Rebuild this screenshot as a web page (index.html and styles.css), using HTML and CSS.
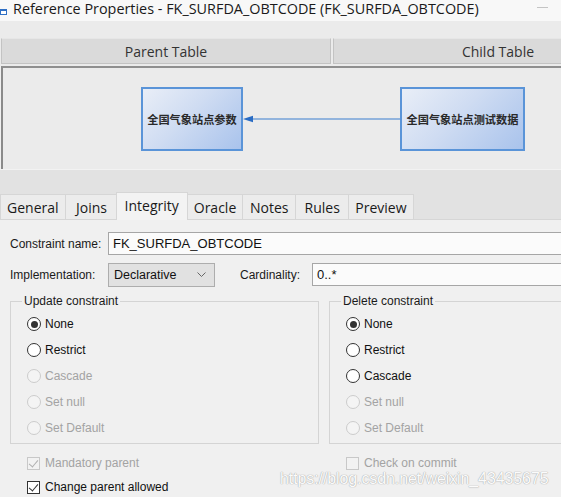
FILE: index.html
```html
<!DOCTYPE html>
<html lang="en">
<head>
<meta charset="utf-8">
<title>Reference Properties</title>
<link rel="stylesheet" href="styles.css">
</head>
<body>
<div class="window">
  <div class="titlebar">
    <svg class="app-icon" width="7" height="8" viewBox="0 0 7 8"><rect x="0.5" y="1.5" width="6" height="5" fill="#fff" stroke="#2f6fc4"/><rect x="0" y="1" width="7" height="2" fill="#2f6fc4"/></svg>
    <span class="title">Reference Properties - FK_SURFDA_OBTCODE (FK_SURFDA_OBTCODE)</span>
    <span class="minimize"></span>
  </div>
  <div class="top-gap"></div>
  <div class="headers">
    <div class="col-header">Parent Table</div>
    <div class="col-header">Child Table</div>
  </div>
  <div class="diagram">
    <div class="node node-parent">全国气象站点参数</div>
    <svg class="link" width="160" height="12" viewBox="0 0 160 12">
      <line x1="10" y1="6" x2="160" y2="6" stroke="#3b7fd0" stroke-width="1.2"/>
      <polygon points="3,6 13,2.8 13,9.2" fill="#2a6cc4"/>
    </svg>
    <div class="node node-child">全国气象站点测试数据</div>
  </div>
  <div class="tab-strip">
    <div class="tab">General</div>
    <div class="tab">Joins</div>
    <div class="tab tab-active">Integrity</div>
    <div class="tab">Oracle</div>
    <div class="tab">Notes</div>
    <div class="tab">Rules</div>
    <div class="tab">Preview</div>
  </div>
  <div class="tab-body">
    <div class="form-row">
      <label class="field-label">Constraint name:</label>
      <div class="textbox textbox-wide">FK_SURFDA_OBTCODE</div>
    </div>
    <div class="form-row">
      <label class="field-label">Implementation:</label>
      <div class="combo">
        <span>Declarative</span>
        <svg width="9" height="5" viewBox="0 0 9 5"><polyline points="0.5,0.5 4.5,4.5 8.5,0.5" fill="none" stroke="#666" stroke-width="1"/></svg>
      </div>
      <label class="field-label card-label">Cardinality:</label>
      <div class="textbox textbox-card">0..*</div>
    </div>
    <div class="groups">
      <fieldset class="group">
        <legend>Update constraint</legend>
        <div class="options">
          <div class="option"><span class="radio checked"></span><span>None</span></div>
          <div class="option"><span class="radio"></span><span>Restrict</span></div>
          <div class="option disabled"><span class="radio"></span><span>Cascade</span></div>
          <div class="option disabled"><span class="radio"></span><span>Set null</span></div>
          <div class="option disabled"><span class="radio"></span><span>Set Default</span></div>
        </div>
      </fieldset>
      <fieldset class="group">
        <legend>Delete constraint</legend>
        <div class="options">
          <div class="option"><span class="radio checked"></span><span>None</span></div>
          <div class="option"><span class="radio"></span><span>Restrict</span></div>
          <div class="option"><span class="radio"></span><span>Cascade</span></div>
          <div class="option disabled"><span class="radio"></span><span>Set null</span></div>
          <div class="option disabled"><span class="radio"></span><span>Set Default</span></div>
        </div>
      </fieldset>
    </div>
    <div class="checks">
      <div class="check-col">
        <div class="option check-row disabled"><span class="checkbox checked"></span><span>Mandatory parent</span></div>
        <div class="option check-row"><span class="checkbox checked"></span><span>Change parent allowed</span></div>
      </div>
      <div class="check-col">
        <div class="option check-row disabled"><span class="checkbox"></span><span>Check on commit</span></div>
      </div>
    </div>
    <div class="watermark">https://blog.csdn.net/weixin_43435675</div>
  </div>
</div>
</body>
</html>
```
FILE: styles.css
```css
* { box-sizing: border-box; }
html, body { margin: 0; padding: 0; }
body {
  width: 561px;
  height: 497px;
  overflow: hidden;
  background: #f0f0f0;
  font-family: "Liberation Sans", Arial, sans-serif;
  font-size: 12px;
  color: #111;
}
.window { width: 561px; height: 497px; overflow: hidden; display: flex; flex-direction: column; }

.titlebar {
  height: 21px;
  flex: none;
  background: #f8f8f8;
  display: flex;
  align-items: flex-start;
  position: relative;
}
.app-icon { margin-top: 8px; flex: none; }
.title {
  margin-left: 6px;
  font-family: "Open Sans", "Noto Sans", sans-serif;
  font-size: 14.4px;
  line-height: 18px;
  color: #1a1a1a;
  white-space: nowrap;
}
.minimize {
  position: absolute;
  left: 537px;
  top: 7px;
  width: 11px;
  height: 1px;
  background: #c4c4c4;
}

.top-gap { height: 17px; flex: none; background: #ebebeb; }

.headers {
  height: 28px;
  flex: none;
  display: flex;
  gap: 2px;
  padding-left: 1px;
  padding-bottom: 2px;
  background: #ebebeb;
}
.col-header {
  flex: none;
  width: 330px;
  height: 26px;
  background: #dadada;
  border: 1px solid #c3c3c3;
  border-top-color: #e6e6e6;
  display: flex;
  align-items: center;
  justify-content: center;
  font-family: "Open Sans", "Noto Sans", sans-serif;
  font-size: 14px;
  color: #333;
}

.diagram {
  position: relative;
  height: 103px;
  flex: none;
  margin-left: 1px;
  background: #ebebeb;
  border-top: 2px solid #8f8f8f;
  border-left: 2px solid #8a8a8a;
}
.node {
  position: absolute;
  top: 19px;
  height: 64px;
  display: flex;
  align-items: center;
  justify-content: center;
  background: linear-gradient(135deg, #e9eef7 0%, #cfdcf2 45%, #a9c3ec 100%);
  border: 2px solid #5a94d8;
  font-family: "Noto Sans CJK SC", sans-serif;
  font-size: 11.2px;
  font-weight: 700;
  color: #2a2a2a;
  white-space: nowrap;
}
.node-parent { left: 138px; width: 102px; }
.node-child { left: 397px; width: 125px; }
.link { position: absolute; left: 237px; top: 45px; }

.tab-strip {
  height: 50px;
  flex: none;
  display: flex;
  align-items: flex-end;
  background: #e2e2e2;
  border-top: 1px solid #f2f2f2;
  position: relative;
  z-index: 1;
}
.tab {
  height: 25px;
  min-width: 54px;
  padding: 0 6px;
  display: flex;
  align-items: center;
  justify-content: center;
  background: #ececec;
  border: 1px solid #d6d6d6;
  border-bottom: none;
  margin-right: -1px;
  font-family: "Open Sans", "Noto Sans", sans-serif;
  font-size: 14px;
  color: #1a1a1a;
}
.tab-active {
  height: 28px;
  margin: 0 -1px -1px -2px;
  padding: 0 8px 3px;
  background: #f3f3f3;
  position: relative;
  z-index: 2;
}

.tab-body {
  flex: 1;
  position: relative;
  background: #f0f0f0;
  border-top: 1px solid #d6d6d6;
  padding: 12px 0 0 10px;
  overflow: hidden;
}
.form-row {
  display: flex;
  align-items: center;
  height: 23px;
  margin-bottom: 8px;
}
.field-label { width: 98px; flex: none; color: #1a1a1a; }
.textbox {
  height: 23px;
  border: 1px solid #a6a6a6;
  background: #fbfbfb;
  display: flex;
  align-items: center;
  padding-left: 4px;
  font-size: 13px;
  color: #111;
  flex: none;
}
.textbox-wide { width: 470px; }
.textbox-card { width: 260px; }
.combo {
  width: 107px;
  height: 24px;
  flex: none;
  border: 1px solid #adadad;
  background: #e1e1e1;
  display: flex;
  align-items: center;
  justify-content: space-between;
  padding: 0 8px 0 5px;
  font-size: 12.5px;
  color: #111;
}
.card-label { width: 72px; margin-left: 25px; }

.groups {
  display: flex;
  gap: 10px;
}
.group {
  flex: none;
  width: 309px;
  margin: 0;
  padding: 0;
  border: 1px solid #d4d4d4;
}
.group legend {
  margin-left: 11px;
  padding: 0 2px;
  line-height: 14px;
  color: #1a1a1a;
}
.options { padding: 3px 0 2px 16px; }
.option {
  height: 26px;
  display: flex;
  align-items: center;
  gap: 4px;
  color: #111;
}
.option.disabled { color: #a3a3a3; }
.radio {
  width: 14px;
  height: 14px;
  flex: none;
  border: 1px solid #333;
  border-radius: 50%;
  background: #fff;
  position: relative;
}
.radio.checked::after {
  content: "";
  position: absolute;
  left: 2.5px;
  top: 2.5px;
  width: 7px;
  height: 7px;
  border-radius: 50%;
  background: #333;
}
.disabled .radio { border-color: #cccccc; background: #f4f4f4; }

.checks {
  display: flex;
  gap: 10px;
  margin-top: 7px;
}
.check-col { width: 309px; flex: none; padding-left: 17px; }
.check-row { height: 24px; }
.checkbox {
  width: 13px;
  height: 13px;
  flex: none;
  border: 1px solid #333;
  background: #fff;
  position: relative;
  margin-right: 1px;
}
.checkbox.checked::after {
  content: "";
  position: absolute;
  left: 3px;
  top: 0px;
  width: 4px;
  height: 8px;
  border: solid #333;
  border-width: 0 1.3px 1.3px 0;
  transform: rotate(40deg);
}
.disabled .checkbox { border-color: #c8c8c8; background: #f2f2f2; }
.disabled .checkbox.checked::after { border-color: #b0b0b0; }

.watermark {
  position: absolute;
  left: 280px;
  top: 250px;
  font-size: 16px;
  color: #fbfbfb;
  text-shadow: 0 0 1px #a8a8a8, 0 0 1px #a8a8a8;
  white-space: nowrap;
  letter-spacing: -0.1px;
}
```
